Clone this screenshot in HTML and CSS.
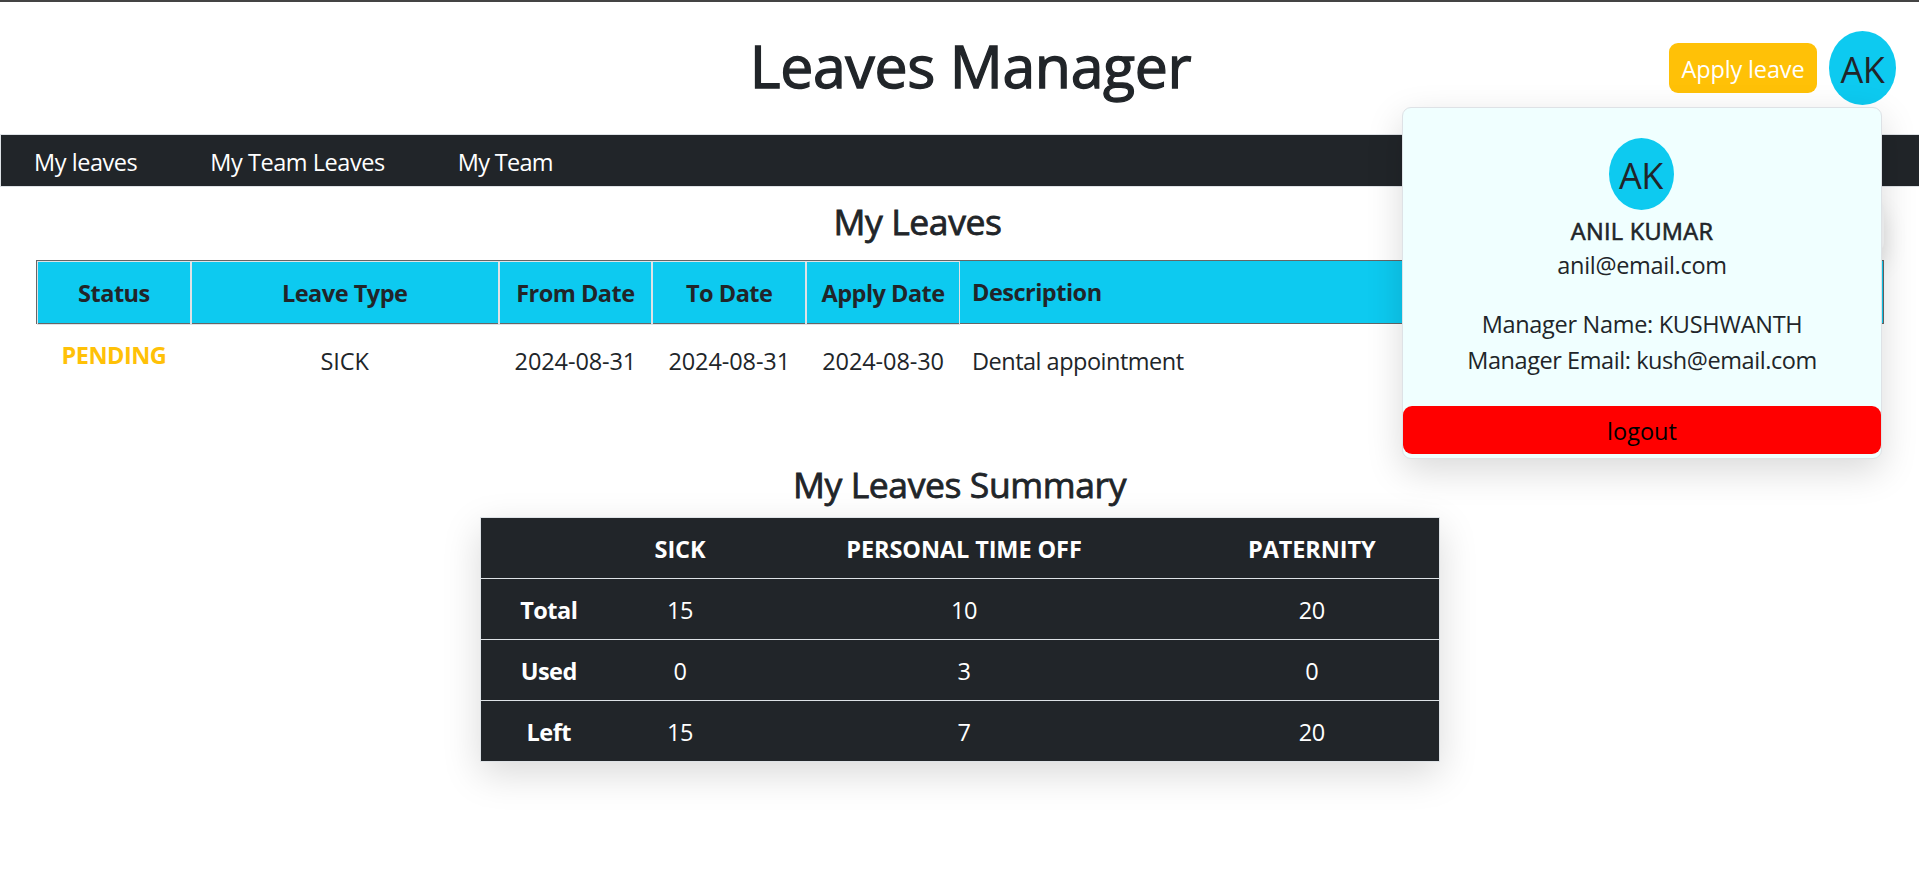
FILE: index.html
```html
<!DOCTYPE html>
<html lang="en">
<head>
<meta charset="utf-8">
<title>Leaves Manager</title>
<link rel="stylesheet" href="styles.css">
</head>
<body>
<header class="header">
  <h1 class="title">Leaves Manager</h1>
  <div class="actions">
    <button class="apply">Apply leave</button>
    <div class="profile">
      <div class="avatar">AK</div>
      <div class="menu">
        <div class="avatar avatar-small">AK</div>
        <div class="name">ANIL KUMAR</div>
        <div class="email">anil@email.com</div>
        <div class="manager first">Manager Name: KUSHWANTH</div>
        <div class="manager">Manager Email: kush@email.com</div>
        <button class="logout">logout</button>
      </div>
    </div>
  </div>
</header>
<nav class="nav">
  <a>My leaves</a>
  <a>My Team Leaves</a>
  <a class="nav-team">My Team</a>
</nav>
<main>
  <section class="leaves">
    <div class="leaves-head">
      <h2>My Leaves</h2>
      <div class="filter"></div>
    </div>
    <div class="grid grid-head">
      <div class="cell">Status</div>
      <div class="cell">Leave Type</div>
      <div class="cell">From Date</div>
      <div class="cell">To Date</div>
      <div class="cell">Apply Date</div>
      <div class="desc">Description</div>
    </div>
    <div class="grid grid-row">
      <div class="pending">PENDING</div>
      <div class="wide">SICK</div>
      <div class="wide">2024-08-31</div>
      <div class="wide">2024-08-31</div>
      <div class="wide">2024-08-30</div>
      <div class="desc">Dental appointment</div>
    </div>
  </section>
  <section class="summary">
    <h2>My Leaves Summary</h2>
    <table>
      <colgroup><col class="c1"><col class="c2"><col class="c3"><col class="c4"></colgroup>
      <tr class="types"><th></th><th>SICK</th><th>PERSONAL TIME OFF</th><th>PATERNITY</th></tr>
      <tr><th>Total</th><td>15</td><td>10</td><td>20</td></tr>
      <tr><th>Used</th><td>0</td><td>3</td><td>0</td></tr>
      <tr><th>Left</th><td>15</td><td>7</td><td>20</td></tr>
    </table>
  </section>
</main>
</body>
</html>
```
FILE: styles.css
```css
* { box-sizing: border-box; }
body {
  margin: 0;
  border-top: 2px solid #444;
  min-height: 875px;
  background: #fff;
  color: #212529;
  font: 400 23.5px/36px "Open Sans", "Noto Sans", sans-serif;
  letter-spacing: -0.5px;
  overflow: hidden;
}
h1, h2 { margin: 0; font-weight: 400; }
button { font: inherit; letter-spacing: inherit; border: 0; padding: 0; display: block; }

.header {
  display: grid;
  grid-template-columns: 1fr auto 1fr;
  height: 132px;
  padding-left: 22px;
}
.title {
  grid-column: 2;
  padding-top: 27px;
  font-size: 59px;
  line-height: 72px;
  letter-spacing: -0.4px;
  -webkit-text-stroke: 1.3px currentColor;
}
.actions {
  display: flex;
  justify-content: flex-end;
  gap: 12px;
  padding: 29px 23px 0 0;
}
.apply {
  width: 148px;
  height: 50px;
  margin-top: 12px;
  padding-top: 2px;
  border-radius: 9px;
  background: #ffc107;
  color: #fff;
  letter-spacing: -0.15px;
}
.profile { position: relative; width: 67px; height: 74px; }
.avatar {
  width: 67px;
  height: 74px;
  border-radius: 50%;
  background: #0dcaf0;
  font-size: 36px;
  line-height: 78px;
  text-align: center;
}
.menu {
  position: absolute;
  z-index: 1;
  top: 76px;
  right: 14px;
  width: 480px;
  height: 352px;
  padding-top: 30px;
  border: 1px solid #dee2e6;
  border-radius: 9px;
  background: #f0ffff;
  box-shadow: 0 12px 36px rgba(0, 0, 0, .15);
  text-align: center;
  letter-spacing: -0.43px;
}
.avatar-small { width: 65px; height: 72px; margin: 0 auto; line-height: 76px; position: relative; right: 1px; }
.name {
  height: 34px;
  line-height: 43px;
  letter-spacing: 0.3px;
  -webkit-text-stroke: 0.6px currentColor;
}
.email { height: 34px; line-height: 42px; letter-spacing: -0.3px; }
.manager { height: 36px; line-height: 36px; }
.manager.first { margin-top: 28px; letter-spacing: -0.3px; }
.logout {
  width: 100%;
  height: 48px;
  margin-top: 28px;
  padding-top: 1px;
  border-radius: 9px;
  background: red;
  color: #000;
  letter-spacing: 0;
}

.nav {
  display: flex;
  gap: 73px;
  height: 53px;
  padding-left: 33px;
  border: 1px solid #dee2e6;
  border-right: 0;
  background: #212529;
  color: #fff;
  line-height: 54px;
  letter-spacing: -0.45px;
}
.nav-team { letter-spacing: -0.7px; }

.leaves { padding: 0 35px 0 36px; }
.leaves-head { position: relative; height: 73px; padding-right: 85px; }
h2 {
  padding-top: 12px;
  font-size: 35.5px;
  line-height: 44px;
  text-align: center;
  letter-spacing: -0.4px;
  -webkit-text-stroke: 0.8px currentColor;
}
.filter {
  position: absolute;
  top: 13px;
  right: 0;
  width: 70px;
  height: 52px;
  border-radius: 9px;
  background: #f8f9fa;
  box-shadow: 0 12px 24px rgba(0, 0, 0, .12);
}
.grid {
  display: grid;
  grid-template-columns: 1fr 2fr 1fr 1fr 1fr 6fr;
  border: 1px solid transparent;
  text-align: center;
}
.grid-head {
  position: relative;
  height: 64px;
  border-color: #666;
  background: #0dcaf0;
  font-weight: 700;
  line-height: 62px;
}
.cell { border: 1px solid #dee2e6; }
.grid .desc { padding-left: 12px; text-align: left; }
.grid-row { height: 125px; line-height: 73px; }
.wide { letter-spacing: -0.1px; }
.pending { color: #ffc107; font-weight: 700; line-height: 61px; }

.summary { width: 960px; margin: 0 auto; }
.summary h2 { height: 68px; padding-top: 13px; }
table {
  width: 960px;
  border-collapse: collapse;
  table-layout: fixed;
  border: 1px solid #dee2e6;
  background: #212529;
  color: #fff;
  text-align: center;
  box-shadow: 0 12px 36px rgba(0, 0, 0, .15);
}
tr { height: 61px; border-bottom: 1px solid #dee2e6; }
th, td { padding: 2px 0 0; }
.types th { letter-spacing: -0.1px; }
.c1 { width: 137px; }
.c2 { width: 126px; }
.c3 { width: 442px; }
```
